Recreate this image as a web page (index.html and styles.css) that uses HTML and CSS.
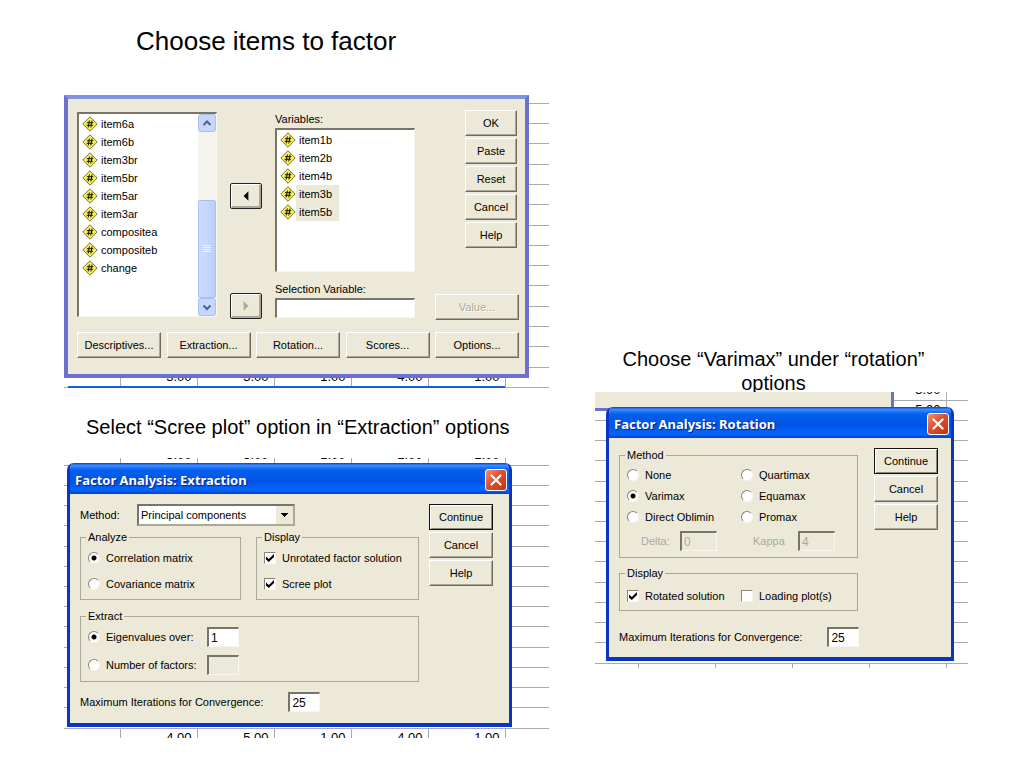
FILE: index.html
```html
<!doctype html>
<html lang="en">
    <head>
        <title>Choose items to factor</title>
        <meta charset="utf-8">
        <meta name="viewport" content="width=device-width, initial-scale=1">
        <link rel="stylesheet" href="styles.css">
    </head>
    <body>
        <svg class="defs" width="0" height="0" aria-hidden="true">
            <symbol id="numeric" viewBox="0 0 16 16">
                <path d="M8 .8 15.2 8 8 15.2 .8 8z" fill="#f7f04e" stroke="#77742c"/>
                <path d="M7.4 4.5 6.2 11.5M10 4.5 8.8 11.5M5 6.7h6.3M4.6 9.3h6.3" fill="none" stroke="#111"/>
            </symbol>
            <symbol id="cross" viewBox="0 0 22 22">
                <path d="M6 6 16 16M16 6 6 16" stroke="#fff" stroke-width="2.4" stroke-linecap="round"/>
            </symbol>
        </svg>

        <main class="slide">
            <section class="left">
                <h1>Choose items to factor</h1>

                <div class="shot shot-items">
                    <table class="sheet">
                        <colgroup><col class="first"><col class="num"><col class="num"><col class="num"><col class="num"><col class="num"><col></colgroup>
                        <tr><td colspan="7"></td></tr>
                        <tr><td colspan="7"></td></tr>
                        <tr><td colspan="7"></td></tr>
                        <tr><td colspan="7"></td></tr>
                        <tr><td colspan="7"></td></tr>
                        <tr><td colspan="7"></td></tr>
                        <tr><td colspan="7"></td></tr>
                        <tr><td colspan="7"></td></tr>
                        <tr><td colspan="7"></td></tr>
                        <tr><td colspan="7"></td></tr>
                        <tr><td colspan="7"></td></tr>
                        <tr><td colspan="7"></td></tr>
                        <tr><td colspan="7"></td></tr>
                        <tr><td colspan="7"></td></tr>
                        <tr><td></td><td>3.00</td><td>3.00</td><td>1.00</td><td>4.00</td><td>1.00</td><td></td></tr>
                    </table>
                    <div class="next-window"></div>
                    <form class="dialog inactive">
                        <div class="items">
                            <div class="listbox source">
                                <ul>
                                    <li><svg><use href="#numeric"/></svg><span>item6a</span></li>
                                    <li><svg><use href="#numeric"/></svg><span>item6b</span></li>
                                    <li><svg><use href="#numeric"/></svg><span>item3br</span></li>
                                    <li><svg><use href="#numeric"/></svg><span>item5br</span></li>
                                    <li><svg><use href="#numeric"/></svg><span>item5ar</span></li>
                                    <li><svg><use href="#numeric"/></svg><span>item3ar</span></li>
                                    <li><svg><use href="#numeric"/></svg><span>compositea</span></li>
                                    <li><svg><use href="#numeric"/></svg><span>compositeb</span></li>
                                    <li><svg><use href="#numeric"/></svg><span>change</span></li>
                                </ul>
                                <div class="scrollbar">
                                    <button type="button" aria-label="Scroll up"><svg viewBox="0 0 16 16"><path d="M4.500 10 8 6.500l3.500 3.500"/></svg></button>
                                    <div class="thumb"><svg viewBox="0 0 8 8"><path d="M0 .5h8M0 2.500h8M0 4.500h8M0 6.500h8"/></svg></div>
                                    <button type="button" aria-label="Scroll down"><svg viewBox="0 0 16 16"><path d="M4.500 6.500 8 10l3.500-3.500"/></svg></button>
                                </div>
                            </div>
                            <div class="arrows">
                                <button type="button" class="btn arrow" aria-label="Remove variable"><svg viewBox="0 0 10 10"><path d="M7 1v8L3 5z"/></svg></button>
                                <button type="button" class="btn arrow" aria-label="Set selection variable" disabled><svg viewBox="0 0 10 10"><path d="M3 1v8l4-4z"/></svg></button>
                            </div>
                            <div class="chosen">
                                <span>Variables:</span>
                                <div class="listbox">
                                    <ul>
                                        <li><svg><use href="#numeric"/></svg><span>item1b</span></li>
                                        <li><svg><use href="#numeric"/></svg><span>item2b</span></li>
                                        <li><svg><use href="#numeric"/></svg><span>item4b</span></li>
                                        <li><svg><use href="#numeric"/></svg><span class="marked">item3b</span></li>
                                        <li><svg><use href="#numeric"/></svg><span class="marked">item5b</span></li>
                                    </ul>
                                </div>
                                <label for="selection">Selection Variable:</label>
                                <input type="text" id="selection">
                            </div>
                            <div class="side">
                                <div class="stack">
                                    <button type="button" class="btn">OK</button>
                                    <button type="button" class="btn">Paste</button>
                                    <button type="button" class="btn">Reset</button>
                                    <button type="button" class="btn">Cancel</button>
                                    <button type="button" class="btn">Help</button>
                                </div>
                                <button type="button" class="btn wide" disabled>Value...</button>
                            </div>
                        </div>
                        <div class="more">
                            <button type="button" class="btn wide">Descriptives...</button>
                            <button type="button" class="btn wide">Extraction...</button>
                            <button type="button" class="btn wide">Rotation...</button>
                            <button type="button" class="btn wide">Scores...</button>
                            <button type="button" class="btn wide">Options...</button>
                        </div>
                    </form>
                </div>

                <p class="caption">Select “Scree plot” option in “Extraction” options</p>

                <div class="shot shot-extraction">
                    <table class="sheet">
                        <colgroup><col class="first"><col class="num"><col class="num"><col class="num"><col class="num"><col class="num"><col></colgroup>
                        <tr><td></td><td>3.00</td><td>3.00</td><td>1.00</td><td>1.00</td><td>1.00</td><td></td></tr>
                        <tr><td colspan="7"></td></tr>
                        <tr><td colspan="7"></td></tr>
                        <tr><td colspan="7"></td></tr>
                        <tr><td colspan="7"></td></tr>
                        <tr><td colspan="7"></td></tr>
                        <tr><td colspan="7"></td></tr>
                        <tr><td colspan="7"></td></tr>
                        <tr><td colspan="7"></td></tr>
                        <tr><td colspan="7"></td></tr>
                        <tr><td colspan="7"></td></tr>
                        <tr><td colspan="7"></td></tr>
                        <tr><td colspan="7"></td></tr>
                        <tr><td colspan="7"></td></tr>
                        <tr><td></td><td>4.00</td><td>5.00</td><td>1.00</td><td>4.00</td><td>1.00</td><td></td></tr>
                    </table>
                    <form class="dialog">
                        <header class="titlebar">
                            <h2>Factor Analysis: Extraction</h2>
                            <button type="button" class="close" aria-label="Close"><svg><use href="#cross"/></svg></button>
                        </header>
                        <div class="content">
                            <div class="options">
                                <div class="method">
                                    <label for="method">Method:</label>
                                    <select id="method"><option>Principal components</option></select>
                                </div>
                                <div class="pair">
                                    <fieldset>
                                        <legend>Analyze</legend>
                                        <label><input type="radio" name="analyze" checked>Correlation matrix</label>
                                        <label><input type="radio" name="analyze">Covariance matrix</label>
                                    </fieldset>
                                    <fieldset>
                                        <legend>Display</legend>
                                        <label><input type="checkbox" checked>Unrotated factor solution</label>
                                        <label><input type="checkbox" checked>Scree plot</label>
                                    </fieldset>
                                </div>
                                <fieldset class="extract">
                                    <legend>Extract</legend>
                                    <label><input type="radio" name="extract" checked>Eigenvalues over:</label>
                                    <input type="text" value="1" aria-label="Eigenvalues over">
                                    <label><input type="radio" name="extract">Number of factors:</label>
                                    <input type="text" aria-label="Number of factors" disabled>
                                </fieldset>
                                <div class="iterations">
                                    <label for="max-extraction">Maximum Iterations for Convergence:</label>
                                    <input type="text" id="max-extraction" value="25">
                                </div>
                            </div>
                            <div class="stack">
                                <button type="submit" class="btn default">Continue</button>
                                <button type="button" class="btn">Cancel</button>
                                <button type="button" class="btn">Help</button>
                            </div>
                        </div>
                    </form>
                </div>
            </section>

            <section class="right">
                <p class="caption">Choose “Varimax” under “rotation” options</p>

                <div class="shot shot-rotation">
                    <table class="sheet">
                        <colgroup><col class="first"><col class="num"><col class="num"><col class="num"><col class="num"><col></colgroup>
                        <tr><td></td><td></td><td></td><td></td><td>3.00</td><td></td></tr>
                        <tr><td></td><td></td><td></td><td></td><td>5.00</td><td></td></tr>
                        <tr><td colspan="6"></td></tr>
                        <tr><td colspan="6"></td></tr>
                        <tr><td colspan="6"></td></tr>
                        <tr><td colspan="6"></td></tr>
                        <tr><td colspan="6"></td></tr>
                        <tr><td colspan="6"></td></tr>
                        <tr><td colspan="6"></td></tr>
                        <tr><td colspan="6"></td></tr>
                        <tr><td colspan="6"></td></tr>
                        <tr><td colspan="6"></td></tr>
                        <tr><td colspan="6"></td></tr>
                        <tr><td colspan="6"></td></tr>
                        <tr><td></td><td></td><td></td><td></td><td></td><td></td></tr>
                    </table>
                    <div class="parent-window"></div>
                    <form class="dialog">
                        <header class="titlebar">
                            <h2>Factor Analysis: Rotation</h2>
                            <button type="button" class="close" aria-label="Close"><svg><use href="#cross"/></svg></button>
                        </header>
                        <div class="content">
                            <div class="options">
                                <fieldset class="two">
                                    <legend>Method</legend>
                                    <label><input type="radio" name="rotation">None</label>
                                    <label><input type="radio" name="rotation">Quartimax</label>
                                    <label><input type="radio" name="rotation" checked>Varimax</label>
                                    <label><input type="radio" name="rotation">Equamax</label>
                                    <label><input type="radio" name="rotation">Direct Oblimin</label>
                                    <label><input type="radio" name="rotation">Promax</label>
                                    <div class="param">
                                        <label for="delta">Delta:</label>
                                        <input type="text" id="delta" value="0" disabled>
                                    </div>
                                    <div class="param">
                                        <label for="kappa">Kappa</label>
                                        <input type="text" id="kappa" value="4" disabled>
                                    </div>
                                </fieldset>
                                <fieldset class="two">
                                    <legend>Display</legend>
                                    <label><input type="checkbox" checked>Rotated solution</label>
                                    <label><input type="checkbox">Loading plot(s)</label>
                                </fieldset>
                                <div class="iterations">
                                    <label for="max-rotation">Maximum Iterations for Convergence:</label>
                                    <input type="text" id="max-rotation" value="25">
                                </div>
                            </div>
                            <div class="stack">
                                <button type="submit" class="btn default">Continue</button>
                                <button type="button" class="btn">Cancel</button>
                                <button type="button" class="btn">Help</button>
                            </div>
                        </div>
                    </form>
                </div>
            </section>
        </main>
    </body>
</html>
```
FILE: styles.css
```css
* {
    box-sizing: border-box;
}
body {
    margin: 0;
    background: #fff;
    color: #000;
    font-family: "Liberation Sans", Arial, sans-serif;
}
.defs {
    position: absolute;
}
.slide {
    display: grid;
    grid-template-columns: minmax(0, 485fr) minmax(0, 373fr);
    column-gap: 46px;
    padding: 26px 56px 30px 64px;
}
h1 {
    margin: 0 0 39px;
    padding-left: 72px;
    font-size: 26px;
    font-weight: normal;
    line-height: 30px;
}
.caption {
    margin: 27px 0 19px;
    padding-left: 22px;
    font-size: 20px;
    line-height: 24px;
}
.right {
    margin-top: 321px;
}
.right .caption {
    margin: 0 0 -3px;
    padding: 0 20px 0 4px;
    text-align: center;
}

/* spreadsheet and dialog share one grid cell, dialog on top */
.shot {
    display: grid;
    grid-template: auto / minmax(0, 1fr);
    overflow: hidden;
    font-size: 11px;
    line-height: 14px;
}
.shot > * {
    grid-area: 1 / 1;
    min-width: 0;
}
.sheet {
    width: 100%;
    table-layout: fixed;
    border-collapse: collapse;
    font-size: 13px;
}
.sheet tr {
    height: 20px;
}
.sheet td {
    padding: 0 5px 0 0;
    border-right: 1px solid #a9a9b2;
    border-bottom: 1px solid #a9a9b2;
    text-align: right;
}
.sheet td:last-child {
    border-right: 0;
}
.first {
    width: 56px;
}
.num {
    width: 77px;
}
.shot-items .sheet {
    margin-top: -12px;
}
.shot-items .dialog {
    margin: 0 20px 10px 0;
}
.shot-extraction .sheet {
    margin: -13px 0 -11px;
}
.shot-extraction .dialog {
    margin: 5px 37px 11px 3px;
}
.shot-rotation .sheet {
    margin: -12px 0 -16px;
}
.shot-rotation .dialog {
    margin: 15px 14px 7px 11px;
}
.shot-rotation .first {
    width: 43px;
}
.next-window {
    align-self: end;
    height: 2px;
    margin: 0 44px 0 4px;
    background: #1260dc;
}
.parent-window {
    height: 19px;
    margin-right: 74px;
    border: solid #6a6fd0;
    border-width: 0 3px 3px 0;
    background: #ece9d8;
}

.dialog {
    border: solid #0a35c4;
    border-width: 0 3px 4px;
    border-radius: 7px 7px 0 0;
    background: #ece9d8;
    overflow: hidden;
}
.dialog.inactive {
    padding: 11px 6px 16px 9px;
    border: 4px solid #6a6fd0;
    border-top-color: #7d92e2;
    border-radius: 0;
}
.titlebar {
    display: flex;
    align-items: center;
    justify-content: space-between;
    height: 31px;
    margin: 0 -3px;
    padding: 2px 5px 0 8px;
    background: linear-gradient(#0a3fc8, #3a8cff 8%, #0560ee 22%, #0053e4 60%, #0368ff 86%, #0243c8);
}
.titlebar h2 {
    margin: 0;
    color: #fff;
    font: bold 13px/16px "Noto Sans", "Open Sans", sans-serif;
    text-shadow: 1px 1px 1px #0a1f86;
}
.close {
    width: 22px;
    height: 22px;
    padding: 0;
    border: 1px solid #fff;
    border-radius: 3px;
    background: linear-gradient(135deg, #ee9478, #dc5030 45%, #c0330f);
}
.close svg {
    display: block;
    width: 20px;
    height: 20px;
}
.content {
    display: flex;
    gap: 10px;
    padding: 10px 16px 11px 10px;
}
.options {
    flex: 1;
    min-width: 0;
}

.btn {
    height: 26px;
    padding: 0;
    border: 1px solid;
    border-color: #fff #6f6c5c #6f6c5c #fff;
    background: #ece9d8;
    box-shadow: inset -1px -1px #aca899;
    color: #000;
    font: inherit;
    white-space: nowrap;
}
.btn.default {
    border-color: #111;
    box-shadow: inset 1px 1px #fff, inset -1px -1px #8a8777;
}
.btn:disabled {
    color: #aca899;
    text-shadow: 1px 1px #fff;
}
.stack {
    display: flex;
    flex-direction: column;
    gap: 2px;
    width: 64px;
}
.wide {
    width: 84px;
}
.listbox {
    display: flex;
    border: solid;
    border-width: 2px 1px 1px 2px;
    border-color: #77756a #f8f6ee #f8f6ee #77756a;
    background: #fff;
}
ul {
    flex: 1;
    margin: 0;
    padding: 1px 0 0 3px;
    list-style: none;
}
li {
    display: flex;
    align-items: center;
    height: 18px;
}
li svg {
    width: 16px;
    height: 16px;
}
li span {
    padding: 2px 3px;
}
li .marked {
    padding-right: 7px;
    background: #ece9d8;
}

.items {
    display: grid;
    grid-template-columns: 140px 32px 140px minmax(0, 1fr);
    column-gap: 13px;
}
.source {
    margin: 2px 0 3px;
}
.scrollbar {
    display: flex;
    flex-direction: column;
    justify-content: space-between;
    width: 18px;
    background: #f4f3ee;
}
.scrollbar button {
    height: 18px;
    padding: 0;
    border: 1px solid #a9bff2;
    border-radius: 3px;
    background: #c6d6fc;
}
.scrollbar svg {
    display: block;
    width: 16px;
    height: 16px;
    fill: none;
    stroke: #4a6494;
    stroke-width: 2;
}
.thumb {
    display: flex;
    align-items: center;
    justify-content: center;
    height: 98px;
    margin-top: auto;
    border: 1px solid #a9bff2;
    border-radius: 2px;
    background: linear-gradient(90deg, #cfdcfe, #bccffb);
}
.thumb svg {
    width: 8px;
    height: 8px;
    stroke: #edf3ff;
    stroke-width: 1;
}
.arrows {
    display: flex;
    flex-direction: column;
    justify-content: space-between;
    padding: 73px 0 1px;
}
.arrow {
    display: flex;
    align-items: center;
    justify-content: center;
    border-color: #222;
    border-radius: 2px;
    box-shadow: inset 1px 1px #fff, inset -2px -2px #aca899;
}
.arrow svg {
    width: 12px;
    height: 12px;
}
.arrow:disabled {
    fill: #aca899;
}
.chosen {
    display: flex;
    flex-direction: column;
    padding: 2px 0;
}
.chosen .listbox {
    height: 144px;
    margin: 2px 0 10px;
}
.chosen input[type="text"] {
    width: 100%;
    margin-top: 2px;
}
.side {
    display: flex;
    flex-direction: column;
    align-items: flex-end;
    justify-content: space-between;
}
.side .stack {
    width: 52px;
    margin-right: 2px;
}
.more {
    display: flex;
    justify-content: space-between;
    margin-top: 12px;
}

input[type="text"] {
    width: 32px;
    height: 20px;
    padding: 0 2px;
    border: solid;
    border-width: 2px 1px 1px 2px;
    border-color: #77756a #f8f6ee #f8f6ee #77756a;
    background: #fff;
    font: inherit;
    font-size: 12px;
}
input[type="text"]:disabled {
    background: #ece9d8;
    color: #aca899;
}
input[type="radio"],
input[type="checkbox"] {
    appearance: none;
    flex: none;
    width: 12px;
    height: 12px;
    margin: 0 6px 0 0;
    border: 1px solid;
    border-color: #8a8878 #f8f6ee #f8f6ee #8a8878;
    background: #fff;
}
input[type="radio"] {
    border-radius: 50%;
}
input[type="radio"]:checked {
    background: radial-gradient(circle, #000 2px, #fff 3px);
}
input[type="checkbox"]:checked::before {
    content: "";
    display: block;
    width: 8px;
    height: 8px;
    margin: 1px;
    background: #000;
    clip-path: polygon(0 30%, 35% 62%, 100% 0, 100% 38%, 35% 100%, 0 68%);
}
fieldset {
    display: grid;
    align-content: start;
    gap: 12px;
    min-width: 0;
    margin: 0;
    padding: 7px 7px 8px;
    border: 1px solid #aca899;
}
legend {
    margin-left: -2px;
    padding: 0 2px;
}
fieldset label {
    display: flex;
    align-items: center;
    white-space: nowrap;
}
select {
    appearance: none;
    width: 158px;
    height: 22px;
    padding: 0 18px 0 2px;
    border: 2px solid;
    border-color: #77756a #aca899 #aca899 #77756a;
    border-radius: 0;
    background:
        linear-gradient(#000, #000) right 8px top 7px / 1px 4px no-repeat,
        linear-gradient(#000, #000) right 7px top 7px / 3px 3px no-repeat,
        linear-gradient(#000, #000) right 6px top 7px / 5px 2px no-repeat,
        linear-gradient(#000, #000) right 5px top 7px / 7px 1px no-repeat,
        linear-gradient(#ece9d8, #ece9d8) right / 17px 100% no-repeat,
        #fff;
    color: #000;
    font: inherit;
}
.method {
    display: flex;
    align-items: center;
    justify-content: space-between;
    width: 215px;
    max-width: 100%;
    margin-bottom: 4px;
}
.pair {
    display: grid;
    grid-template-columns: 161fr 163fr;
    column-gap: 15px;
    margin-bottom: 9px;
}
.extract {
    grid-template-columns: 119px 32px;
    gap: 8px 0;
    padding: 4px 7px 6px;
}
.iterations {
    display: flex;
    align-items: center;
    gap: 25px;
    margin-top: 10px;
    white-space: nowrap;
}

.shot-rotation .content {
    gap: 16px;
    padding: 10px 13px 10px 10px;
}
.shot-rotation .iterations {
    justify-content: space-between;
    margin-top: 16px;
}
.two {
    grid-template-columns: 114px minmax(0, 1fr);
    gap: 7px 0;
    padding: 6px 7px;
}
.two + .two {
    margin-top: 8px;
    padding: 9px 7px 7px;
}
.param {
    display: flex;
    align-items: center;
    justify-content: space-between;
    width: 90px;
    padding-left: 14px;
}
.param + .param {
    width: 94px;
    padding-left: 12px;
}
.param label {
    color: #aca899;
}
.param input[type="text"] {
    width: 37px;
}
```
